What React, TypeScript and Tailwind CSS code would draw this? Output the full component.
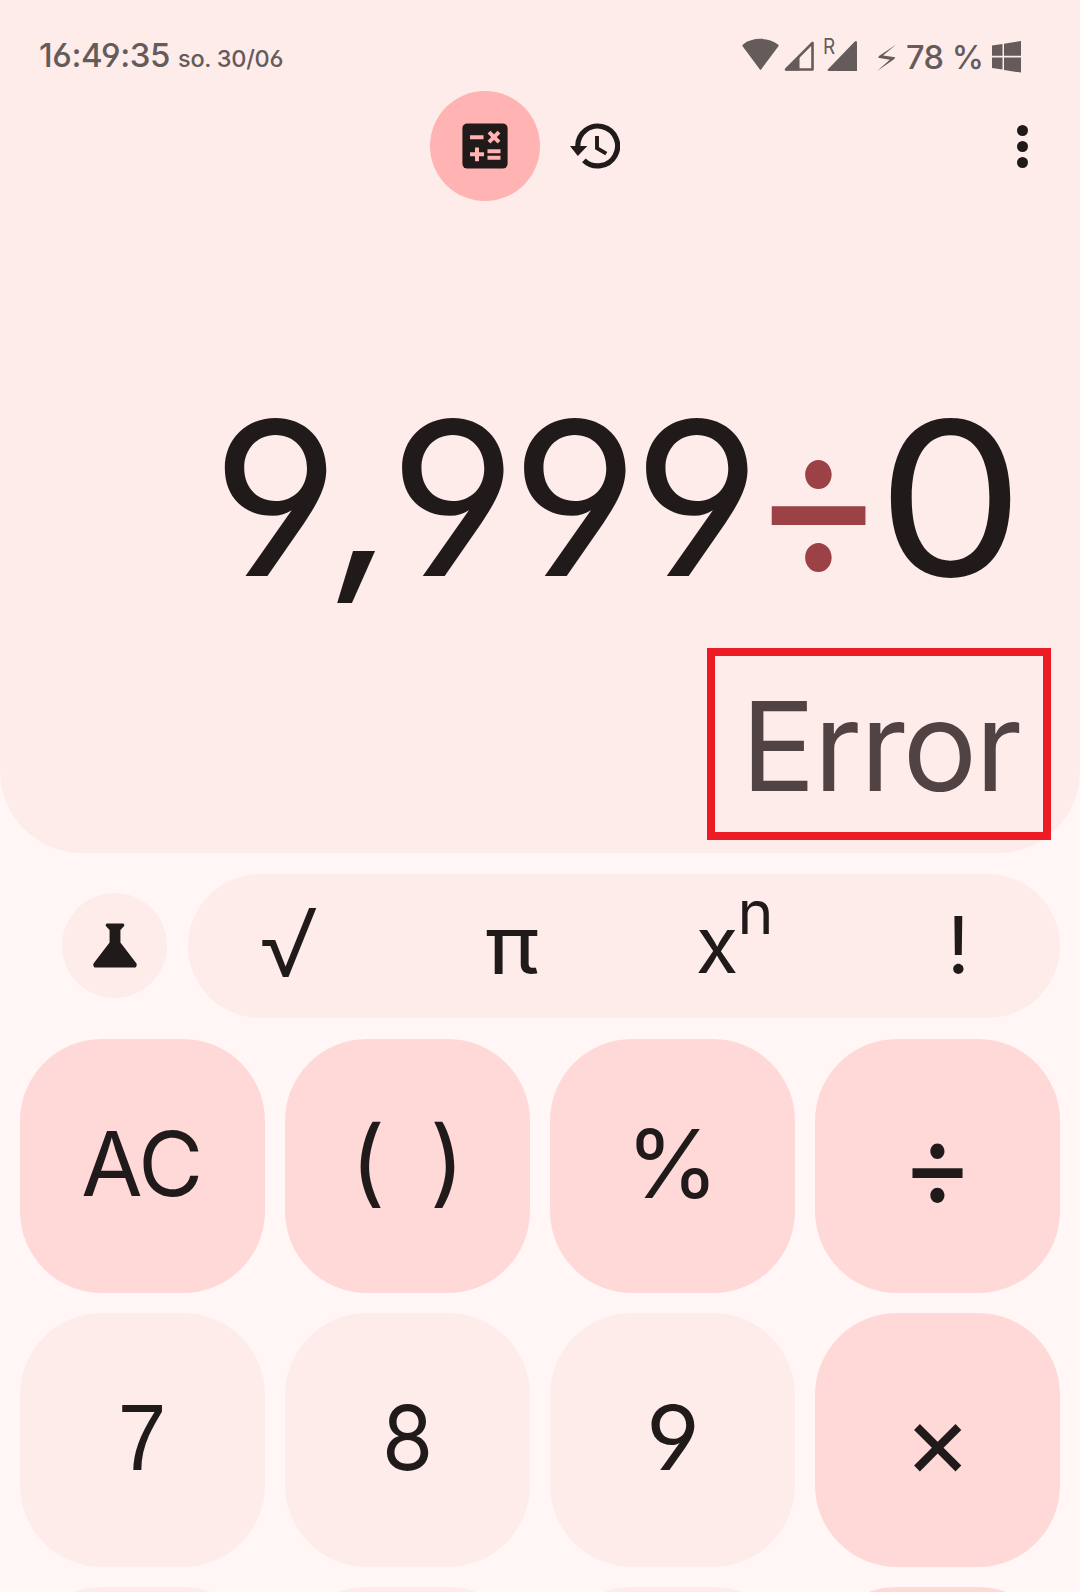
import React from "react";

type KeyProps = { tone: "light" | "accent"; children?: React.ReactNode };

function Key({ tone, children }: KeyProps) {
  return (
    <button
      className={`flex h-[254px] w-full items-center justify-center rounded-[82px] pb-[5px] text-[89px] leading-none ${
        tone === "accent" ? "bg-[#ffd9d7]" : "bg-[#feecea]"
      }`}
    >
      {children}
    </button>
  );
}

function StatusBar() {
  return (
    <div className="flex h-[91px] items-start justify-between pr-[59px] pl-[39px] text-[#655b5b]">
      <div className="flex items-baseline gap-[8px] pt-[35px] leading-[40px]">
        <span className="text-[33px] font-medium tracking-[-0.4px]">16:49:35</span>
        <span className="text-[23.5px] font-[450] tracking-[-0.3px]">so. 30/06</span>
      </div>
      <div className="flex items-start">
        <svg className="mt-[38px] h-[33px] w-[37px]" viewBox="0 0 37 33" fill="currentColor">
          <path d="M0.8 8.6Q-0.2 7.600 1 6.400C10.500 -1 26 -1 36 6.400Q37.200 7.600 36.200 8.600L19.300 31.200Q18.500 32.300 17.700 31.200Z" />
        </svg>
        <svg className="mt-[40px] ml-[5px] h-[32px] w-[31px]" viewBox="0 0 31 32">
          <path d="M2 29.500L28.500 2.800V29.500Z" fill="none" stroke="currentColor" strokeWidth="2.600" strokeLinejoin="round" />
          <path d="M1.500 29.500L15.500 15.500V30.500H2Z" fill="currentColor" />
        </svg>
        <span className="mt-[36px] ml-[8px] w-[12px] origin-left scale-x-[0.86] text-[22px] leading-[20px]">R</span>
        <svg className="mt-[40px] ml-[-8px] h-[32px] w-[31px]" viewBox="0 0 31 32" fill="currentColor">
          <path d="M1.500 31Q0 30.500 1 29.200L27.800 1.600Q30 0 30 2.800V31Z" />
        </svg>
        <svg className="mt-[44px] ml-[19px] h-[28px] w-[20px]" viewBox="0 0 20 28" fill="currentColor">
          <path d="M19.200 0.500L6 11.500L18.200 13.300L17.400 15L0.200 27L12.800 15.800L1.200 13.800L2 12Z" />
        </svg>
        <span className="mt-[38px] ml-[9px] w-[76px] text-[32.5px] leading-[40px] font-medium tracking-[-0.5px] whitespace-nowrap">78 %</span>
        <svg className="mt-[41px] ml-[10px] h-[32px] w-[29px]" viewBox="0 0 29 32" fill="currentColor">
          <path d="M0 4.600L10.500 3V14.800H0ZM12 2.700L29 0V14.800H12ZM0 16.600H10.500V28.600L0 27ZM12 16.600H29V31.600L12 29Z" />
        </svg>
      </div>
    </div>
  );
}

function TopNav() {
  return (
    <div className="flex h-[110px] items-center pr-[52px] pl-[430px] text-[#201a1a]">
      <button className="flex size-[110px] items-center justify-center rounded-full bg-[#ffb3b2]">
        <svg className="size-[46px]" viewBox="0 0 46 46">
          <rect x="0.400" y="0.400" width="45.200" height="45.200" rx="5" fill="currentColor" />
          <g stroke="#ffb3b2" strokeWidth="4" fill="none">
            <path d="M8 14.300H21.500M8 31.300H22M15 24.500V38.300M25.500 28.200H38.500M25.500 34.700H38.500" />
            <path d="M27 9.200L37 19.200M37 9.200L27 19.200" />
          </g>
        </svg>
      </button>
      <button className="ml-[30px]">
        <svg className="h-[46px] w-[50px]" viewBox="0 0 50 46" fill="none" stroke="currentColor">
          <path d="M7.800 23.500V23A19.900 19.900 0 1 1 13.900 37.300" strokeWidth="5.200" />
          <path d="M0 23H17.300L7.800 33Z" fill="currentColor" stroke="none" />
          <path d="M27 13V25.200L36.300 30.600" strokeWidth="3.900" />
        </svg>
      </button>
      <button className="ml-auto flex w-[12px] flex-col items-center gap-[5px]">
        <span className="size-[11px] rounded-full bg-current" />
        <span className="size-[11px] rounded-full bg-current" />
        <span className="size-[11px] rounded-full bg-current" />
      </button>
    </div>
  );
}

function Display() {
  return (
    <section className="flex h-[853px] flex-col rounded-b-[82px] bg-[#feecea]">
      <StatusBar />
      <TopNav />
      <div className="mt-[217px] flex h-[160px] justify-end pr-[64px] text-[214px] leading-[161px] text-[#201a1a]">
        <span className="mr-[-3px] flex origin-right scale-x-[1.025] tracking-[-5.5px] whitespace-nowrap">
          <span>9</span>
          <span className="w-[54px] translate-x-[2px] translate-y-[3px] -skew-x-6 scale-y-[0.88]">,</span>
          <span>999</span>
        </span>
        <span className="flex w-[132px] justify-center">
          <span className="scale-x-[0.91] text-[225px] font-[375] text-[#9c4146]">÷</span>
        </span>
        <span className="flex w-[132px] justify-center">
          <span className="scale-x-[1.09]">0</span>
        </span>
      </div>
      <div className="mt-[70px] mr-[29px] flex h-[192px] w-[344px] items-center justify-center self-end border-8 border-[#ed1c24] pt-[4px] pl-[3px] text-[124px] leading-none tracking-[-2px] text-[#514343]">
        Error
      </div>
    </section>
  );
}

function ScientificRow() {
  return (
    <div className="mt-[21px] flex h-[144px] items-center pr-[20px] pl-[62px]">
      <button className="mb-[2px] flex size-[105px] items-center justify-center rounded-full bg-[#feecea]">
        <svg className="h-[45px] w-[44px]" viewBox="1 0 43 45" preserveAspectRatio="none" fill="currentColor">
          <path d="M14.500 0.500H30.500Q32.500 1.500 31 3.500L27.800 7V19.500L43.300 40.300Q44.500 42.500 42.500 44.500H2.500Q0.500 42.500 1.700 40.300L17.200 19.500V7L14 3.500Q12.500 1.500 14.500 0.500Z" />
        </svg>
      </button>
      <div className="ml-[21px] flex h-[144px] flex-1 items-center justify-between rounded-full bg-[#feecea] px-[51px] pb-[3px] text-[80px] leading-[80px]">
        <button className="mb-[4px] flex w-[100px] justify-center text-[95px] leading-[80px] font-[360]">√</button>
        <button className="flex w-[100px] justify-center">
          <span className="scale-x-[1.12]">π</span>
        </button>
        <button className="flex w-[100px] items-start justify-center pr-[2px] text-[78px]">
          x<sup className="top-0 mt-[-33px] ml-[-1px] text-[61px] leading-[80px]">n</sup>
        </button>
        <button className="mb-[2px] flex w-[100px] justify-center pr-[1px] text-[79px]">!</button>
      </div>
    </div>
  );
}

export default function App() {
  return (
    <main className="h-[1592px] w-[1080px] overflow-hidden bg-[#fff6f5] font-['Inter',sans-serif] text-[#201a1a] [font-feature-settings:'cv03','cv04']">
      <Display />
      <ScientificRow />
      <div className="mt-[21px] grid grid-cols-4 gap-[20px] px-[20px]">
        <Key tone="accent">
          <span className="pr-[2px] tracking-[-1.500px]">AC</span>
        </Key>
        <Key tone="accent">
          <span className="mb-[7px] text-[95px] [word-spacing:18px]">( )</span>
        </Key>
        <Key tone="accent">
          <span className="text-[95px]">%</span>
        </Key>
        <Key tone="accent">
          <span className="mt-[2px] scale-x-[0.92] text-[119px] font-[375]">÷</span>
        </Key>
        <Key tone="light">
          <span className="scale-x-[0.93] font-['Liberation_Sans'] text-[94px]">7</span>
        </Key>
        <Key tone="light">
          <span className="scale-x-[0.93]">8</span>
        </Key>
        <Key tone="light">
          <span className="scale-x-[1.04]">9</span>
        </Key>
        <Key tone="accent">
          <span className="mt-[3px] text-[103px] font-[370]">×</span>
        </Key>
        <Key tone="light" />
        <Key tone="light" />
        <Key tone="light" />
        <Key tone="accent" />
      </div>
    </main>
  );
}
